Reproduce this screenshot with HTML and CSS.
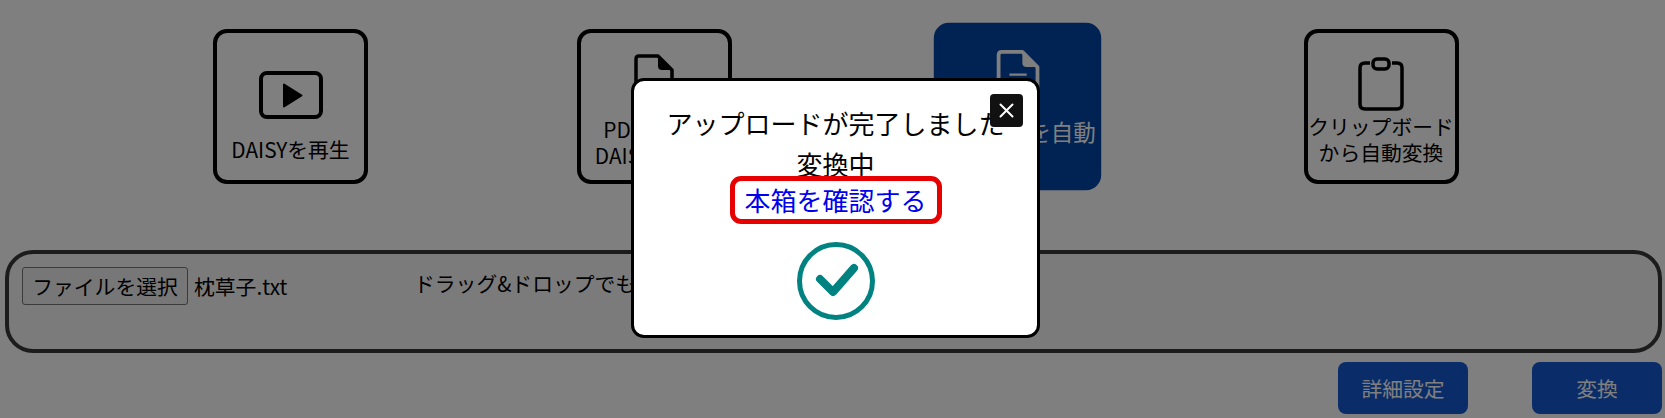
FILE: index.html
```html
<!DOCTYPE html>
<html lang="ja">
<head>
    <meta charset="UTF-8">
    <meta name="viewport" content="width=device-width, initial-scale=1.0">
    <title>DAISY変換</title>
    <link rel="stylesheet" href="styles.css">
</head>
<body>

    <div class="card-row">
        <a class="card" href="#">
            <svg class="card-icon" width="64" height="64" viewBox="0 0 64 64">
                <rect x="2" y="10" width="60" height="44" rx="6" fill="none" stroke="currentColor" stroke-width="4"/>
                <path d="M25 21.5 L25 43.5 L42.5 32.5 Z" fill="currentColor" stroke="currentColor" stroke-width="2" stroke-linejoin="round"/>
            </svg>
            <span class="card-label card-label-single">DAISYを再生</span>
        </a>
        <a class="card card-file" href="#">
            <svg class="card-icon" width="64" height="64" viewBox="0 0 64 64">
                <path d="M17 3 H36 L50 17 V50 Q50 54 46 54 H18 Q14 54 14 50 V6 Q14 3 17 3 Z" fill="none" stroke="currentColor" stroke-width="3.5" stroke-linejoin="round"/>
                <path d="M36 3 L50 17 H40 Q36 17 36 13 Z" fill="currentColor"/>
            </svg>
            <span class="pdf-mark">PDF</span>
            <span class="card-label">PDFを自動<br>DAISYに変換</span>
        </a>
        <a class="card card-file card-active" href="#">
            <svg class="card-icon" width="64" height="64" viewBox="0 0 64 64">
                <path d="M17 3 H36 L50 17 V50 Q50 54 46 54 H18 Q14 54 14 50 V6 Q14 3 17 3 Z" fill="none" stroke="currentColor" stroke-width="3.5" stroke-linejoin="round"/>
                <path d="M36 3 L50 17 H40 Q36 17 36 13 Z" fill="currentColor"/>
                <path d="M24 24 H40" stroke="currentColor" stroke-width="2"/>
            </svg>
            <span class="card-label">テキストを自動<br>変換</span>
        </a>
        <a class="card" href="#">
            <svg class="card-icon" width="64" height="64" viewBox="0 0 64 64">
                <path d="M21 13 H16 Q11 13 11 18 V54 Q11 59 16 59 H48 Q53 59 53 54 V18 Q53 13 48 13 H43" fill="none" stroke="currentColor" stroke-width="3.5"/>
                <rect x="24" y="9" width="16" height="10" rx="4" fill="none" stroke="currentColor" stroke-width="3.5"/>
            </svg>
            <span class="card-label">クリップボード<br>から自動変換</span>
        </a>
    </div>

    <div class="drop-zone">
        <button class="file-button" type="button">ファイルを選択</button>
        <span class="file-name">枕草子.txt</span>
        <span class="drop-hint">ドラッグ&amp;ドロップでも可能です</span>
    </div>

    <div class="action-row">
        <button class="action-button" type="button">詳細設定</button>
        <button class="action-button" type="button">変換</button>
    </div>

    <div class="overlay">
        <div class="modal">
            <button class="modal-close" type="button" aria-label="閉じる">
                <svg width="33" height="33" viewBox="0 0 33 33">
                    <path d="M10.5 10.5 L22.5 22.5 M22.5 10.5 L10.5 22.5" stroke="#fff" stroke-width="2" stroke-linecap="round"/>
                </svg>
            </button>
            <p class="modal-text">アップロードが完了しました</p>
            <p class="modal-text">変換中</p>
            <a class="modal-link" href="#">本箱を確認する</a>
            <svg class="modal-check" width="78" height="78" viewBox="0 0 78 78">
                <circle cx="39" cy="39" r="36.5" fill="none" stroke="#008380" stroke-width="5"/>
                <path d="M23 37 L36 50 L57 26" fill="none" stroke="#008380" stroke-width="8" stroke-linecap="round" stroke-linejoin="round"/>
            </svg>
        </div>
    </div>

</body>
</html>
```

FILE: styles.css
```css
body {
    font-family: "Noto Sans CJK JP", "Noto Sans", sans-serif;
    background-color: #fff;
    color: #000;
    margin: 0;
    padding: 29px 3px 0 5px;
    height: 418px;
    box-sizing: border-box;
    overflow: hidden;
}
.card-row {
    display: flex;
    gap: 208.5px;
    padding-left: 208px;
    margin-bottom: 66px;
}
.card {
    flex: none;
    width: 155px;
    height: 155px;
    box-sizing: border-box;
    border: 4px solid #000;
    border-radius: 14px;
    padding-bottom: 15px;
    color: #000;
    text-decoration: none;
    display: flex;
    flex-direction: column;
    align-items: center;
    justify-content: flex-end;
    position: relative;
}
.card-file {
    padding-bottom: 12px;
}
.card-active {
    background-color: #0246a6;
    border-color: #0246a6;
    color: #fff;
    transform: scale(1.08);
}
.card-label {
    font-size: 20.8px;
    line-height: 25.5px;
    text-align: center;
    white-space: nowrap;
}
.card-label-single {
    margin-top: 10px;
    margin-bottom: 3px;
}
.pdf-mark {
    position: absolute;
    top: 54px;
    left: 50%;
    transform: translateX(-50%);
    font-size: 20.8px;
    line-height: 24px;
    font-weight: 700;
}
.drop-zone {
    height: 103px;
    box-sizing: border-box;
    border: 4px solid #383838;
    border-radius: 28px;
    background-color: #f6f6f6;
    padding: 13px 12px 0 13px;
    display: flex;
    align-items: flex-start;
}
.file-button {
    flex: none;
    width: 166px;
    height: 38px;
    padding: 0;
    font-family: inherit;
    font-size: 20.8px;
    color: #000;
    background-color: #efefef;
    border: 1px solid #767676;
    border-radius: 3px;
}
.file-name {
    font-size: 20.8px;
    line-height: 38px;
    margin-left: 6px;
    width: 220px;
}
.drop-hint {
    font-size: 20.8px;
    line-height: 32px;
}
.action-row {
    display: flex;
    justify-content: flex-end;
    gap: 64px;
    margin-top: 9px;
}
.action-button {
    width: 130px;
    height: 52px;
    font-family: inherit;
    font-size: 20.8px;
    color: #fff;
    background-color: #145ad2;
    border: none;
    border-radius: 8px;
}
.overlay {
    position: fixed;
    inset: 0;
    padding: 0 0 3px 6px;
    box-sizing: border-box;
    background-color: rgba(0, 0, 0, 0.5);
    display: flex;
    align-items: center;
    justify-content: center;
}
.modal {
    width: 409px;
    height: 260px;
    box-sizing: border-box;
    background-color: #fff;
    border: 3px solid #000;
    border-radius: 13px;
    padding-top: 21px;
    position: relative;
    display: flex;
    flex-direction: column;
    align-items: center;
}
.modal-close {
    position: absolute;
    top: 13px;
    right: 14px;
    width: 33px;
    height: 33px;
    padding: 0;
    background-color: #111;
    border: none;
    border-radius: 4px;
}
.modal-text {
    margin: 0;
    font-size: 26px;
    line-height: 41px;
    white-space: nowrap;
}
.modal-link {
    margin-top: -8px;
    width: 212px;
    height: 48px;
    box-sizing: border-box;
    border: 5px solid #e60000;
    border-radius: 11px;
    font-size: 26px;
    line-height: 38px;
    text-align: center;
    color: #0000ee;
    text-decoration: none;
}
.modal-check {
    margin-top: 18px;
}
```
